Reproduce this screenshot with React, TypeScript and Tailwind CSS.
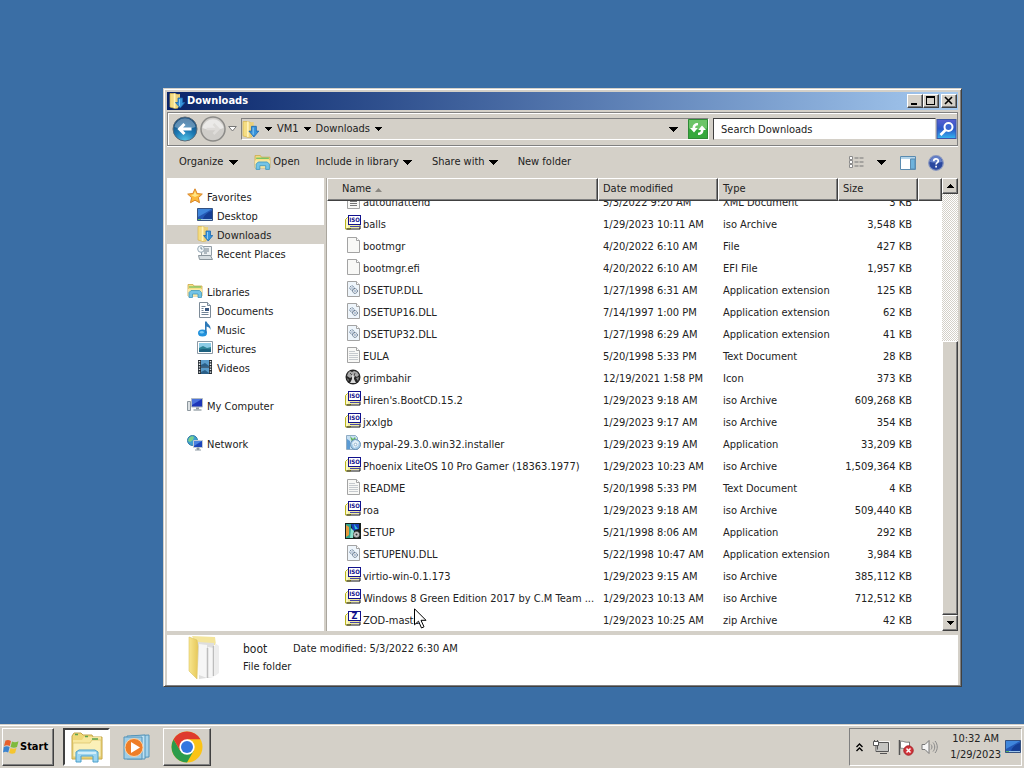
import type { ReactNode } from "react";

type IconProps = { className?: string };

const raised =
  "border border-t-white border-l-white border-r-[#404040] border-b-[#404040] bg-[#d4d0c8] shadow-[inset_-1px_-1px_0_#808080]";

/* ---------- small shapes ---------- */

function Caret() {
  return (
    <svg viewBox="0 0 9 5" className="w-[9px] h-[5px] shrink-0" shapeRendering="crispEdges" aria-hidden="true">
      <path d="M0 0h9L4.500 5z" fill="#000" />
    </svg>
  );
}

function SmallCaret({ up = false }: { up?: boolean }) {
  return (
    <svg viewBox="0 0 7 4" className="w-[7px] h-1 shrink-0" shapeRendering="crispEdges" aria-hidden="true">
      <path d={up ? "M0 4h7L3.500 0z" : "M0 0h7L3.500 4z"} fill="#000" />
    </svg>
  );
}

/* ---------- file icons ---------- */

function ArchiveIcon({ label }: { label: string }) {
  return (
    <svg viewBox="0 0 16 16" className="size-4 shrink-0" aria-hidden="true">
      <path d="M.5 4.500L2.500 2.500h3v11.500h-5z" fill="#fbf8c4" stroke="#b9b41e" />
      <path d="M3 4h12v9H3z" fill="#f0eca0" />
      <path d="M1.500 14h13.500V10.500" fill="none" stroke="#111" />
      <path d="M5 11.500h10" stroke="#4646a8" />
      <rect x="3.500" y=".5" width="12" height="9" fill="#fff" stroke="#11118c" />
      <text
        x="9.500"
        y={label === "Z" ? 8 : 7}
        textAnchor="middle"
        fontFamily="DejaVu Sans Condensed, sans-serif"
        fontWeight="bold"
        fontSize={label === "Z" ? 9 : 6}
        fill="#11118c"
      >
        {label}
      </text>
    </svg>
  );
}

function Sheet({ children, fill = "#f8f8f6" }: { children?: ReactNode; fill?: string }) {
  return (
    <svg viewBox="0 0 16 16" className="size-4 shrink-0" aria-hidden="true">
      <path d="M2.500.5h9l3 3v12h-12z" fill={fill} stroke="#a3a3a3" />
      <path d="M11.500.5v3h3" fill="#fff" stroke="#a3a3a3" />
      {children}
    </svg>
  );
}

function TextIcon() {
  return (
    <Sheet>
      <path d="M4 4.500h6M4 6.500h9M4 8.500h9M4 10.500h9M4 12.500h9" stroke="#c6cace" />
    </Sheet>
  );
}

function XmlIcon() {
  return (
    <Sheet>
      <path d="M5 8.500h7M5 10.500h7M5 12.500h7" stroke="#777" />
    </Sheet>
  );
}

function DllIcon() {
  return (
    <Sheet fill="#eef5fb">
      <circle cx="7" cy="7" r="2.100" fill="#fff" stroke="#4a6684" strokeDasharray="1.200 .5" />
      <circle cx="10" cy="10" r="2.300" fill="#fff" stroke="#3e5570" strokeDasharray="1.200 .5" />
      <circle cx="10" cy="10" r=".8" fill="#547ba8" />
      <circle cx="7" cy="7" r=".7" fill="#547ba8" />
    </Sheet>
  );
}

function GrimIcon() {
  return (
    <svg viewBox="0 0 16 16" className="size-4 shrink-0" aria-hidden="true">
      <circle cx="8" cy="8" r="7.500" fill="#252525" />
      <path d="M3 4l2-2 2 1 2-1 3 1 2 3-2 2-2-1-1 2-2-1-2 1-3-2z" fill="#a8a8a8" />
      <path d="M7 6h2v4l2 4H5l2-4z" fill="#d8d8d8" />
      <path d="M2 9l2 2-1 1zM11 9l3-1-1 4z" fill="#8a8a8a" />
      <path d="M5 4l2 2M10 4L9 7" stroke="#333" strokeWidth=".8" />
    </svg>
  );
}

function InstallerIcon() {
  return (
    <svg viewBox="0 0 16 16" className="size-4 shrink-0" aria-hidden="true">
      <path d="M1.500.5h9l2 2v12h-11z" fill="#c6dff2" stroke="#8facc4" />
      <path d="M2 4l3 2v8H2z" fill="#5b9bd4" />
      <path d="M5 1l3 3 2-2 1 3-4 2z" fill="#62b552" />
      <circle cx="10.500" cy="9.500" r="5" fill="#a8cde9" stroke="#6b93b4" />
      <path d="M7 8l3-3 4 2-1 4-4 2z" fill="#e2eff8" />
      <circle cx="10.500" cy="9.500" r="1.300" fill="#fff" stroke="#6b93b4" strokeWidth=".6" />
    </svg>
  );
}

function SetupIcon() {
  return (
    <svg viewBox="0 0 16 16" className="size-4 shrink-0" aria-hidden="true">
      <path d="M0 0h16v16H0z" fill="#18201c" />
      <path d="M1 1h5v14H1z" fill="#2fa58d" />
      <path d="M1 2l3 2v8l-3 2z" fill="#e49a3b" />
      <path d="M6 1h8v5L8 8z" fill="#1640b8" />
      <path d="M9 1l4 5h-3z" fill="#37c6dc" />
      <path d="M6 5l3 3-1 7H5z" fill="#8be0cd" />
      <circle cx="11.500" cy="11.500" r="3" fill="#c5c5c5" stroke="#555" strokeDasharray="1.500 1" />
      <circle cx="11.500" cy="11.500" r="1" fill="#333" />
    </svg>
  );
}

/* ---------- shell icons ---------- */

function StarIcon() {
  return (
    <svg viewBox="0 0 16 16" className="size-4 shrink-0" aria-hidden="true">
      <path
        d="M8 .8l2.100 4.700 5.200.6-3.900 3.500 1.100 5.100L8 12.200l-4.500 2.500 1.100-5.100L.7 6.100l5.200-.6z"
        fill="#fcb93b"
        stroke="#d9862a"
      />
      <path d="M8 3l1.400 3.500 3 .4-4.400 2-4-2 2.700-.4z" fill="#ffe78a" />
    </svg>
  );
}

function DesktopIcon({ className = "size-4" }: IconProps) {
  return (
    <svg viewBox="0 0 16 16" className={`${className} shrink-0`} aria-hidden="true">
      <path d="M.5 1.500h15v12H.5z" fill="#2458b5" stroke="#345180" />
      <path d="M1 2h14L1 10z" fill="#3f86dc" />
      <path d="M6 12c1-4 5-7 9-8v8z" fill="#153e94" />
      <path d="M1 12.500h14" stroke="#9fc6ea" />
      <path d="M1 12.500h3" stroke="#5db75a" />
    </svg>
  );
}

function DownloadsIcon({ className = "size-4" }: IconProps) {
  return (
    <svg viewBox="0 0 16 16" className={`${className} shrink-0`} aria-hidden="true">
      <path d="M1 .5h5L9 2v13l-3 .5L1 14z" fill="#f5dd83" stroke="#d8b64d" strokeWidth=".7" />
      <path d="M5.500.5V15" stroke="#fff3bd" strokeWidth="1.500" />
      <path d="M7 1.500l4-.5v13H7z" fill="#ebd07a" />
      <path d="M9 5h4.500v4.500h2.300l-4.600 5.500-4.700-5.500H9z" fill="#3794db" stroke="#1c68b0" strokeWidth=".8" />
      <path d="M10.500 6v7" stroke="#8ecbf4" />
    </svg>
  );
}

function RecentIcon() {
  return (
    <svg viewBox="0 0 16 16" className="size-4 shrink-0" aria-hidden="true">
      <path d="M4.500 1.500h10v9h-10z" fill="#edf1f3" stroke="#929da5" />
      <path d="M7 4h5M7 6h5M7 8h3" stroke="#71808b" />
      <path d="M1.500 10.500h12l2 4h-13z" fill="#d6dde1" stroke="#8b969d" />
      <circle cx="4" cy="4" r="3.300" fill="#f5f9fb" stroke="#94a6b2" />
      <path d="M4 2v2h1.500" stroke="#56738a" fill="none" strokeWidth=".8" />
    </svg>
  );
}

function LibraryIcon({ className = "size-4" }: IconProps) {
  return (
    <svg viewBox="0 0 16 16" className={`${className} shrink-0`} aria-hidden="true">
      <path d="M1 1.500h5l1 1.500h8v10H1z" fill="#f7df87" stroke="#cbaa48" strokeWidth=".8" />
      <path d="M2 4h12" stroke="#6abf62" strokeWidth="1.200" />
      <path d="M1 6h14v7H1z" fill="#fbeaa6" />
      <path d="M2 14.500V9.500L4 7.500h8.500l2 2v5H11V11H5.500v3.500z" fill="#74c4e6" stroke="#4198bd" strokeWidth=".8" />
    </svg>
  );
}

function DocumentsIcon() {
  return (
    <svg viewBox="0 0 16 16" className="size-4 shrink-0" aria-hidden="true">
      <path d="M2.500.5h8l3 3v12h-11z" fill="#fff" stroke="#7d8b98" />
      <path d="M10.500.5v3h3" fill="#d8e5ef" stroke="#7d8b98" />
      <path d="M4.500 4.500h4M4.500 6.500h2M4.500 8.500h2M4.500 10.500h7M4.500 12.500h7" stroke="#718496" />
      <path d="M8 6h4v3H8z" fill="#36557e" />
    </svg>
  );
}

function MusicIcon() {
  return (
    <svg viewBox="0 0 16 16" className="size-4 shrink-0" aria-hidden="true">
      <ellipse cx="5.500" cy="12" rx="4.500" ry="3.500" fill="#2292dc" />
      <ellipse cx="4.800" cy="11.200" rx="2" ry="1.300" fill="#7ac9f4" />
      <path d="M8 .5h1.600c.6 2.500 4.600 3.200 3.900 8.500-.8-2.500-2-3-3.900-3.600V12H8z" fill="#2c79b8" />
    </svg>
  );
}

function PicturesIcon() {
  return (
    <svg viewBox="0 0 16 16" className="size-4 shrink-0" aria-hidden="true">
      <path d="M.5 1.500h15v12H.5z" fill="#fff" stroke="#8b99a5" />
      <path d="M2 3h12v9H2z" fill="#8ccbe5" />
      <path d="M2 8l4-2 4 2 4-1v4H2z" fill="#2d8295" />
      <path d="M2 10c4-2 8 0 12-1v3H2z" fill="#1d617f" />
    </svg>
  );
}

function VideosIcon() {
  return (
    <svg viewBox="0 0 16 16" className="size-4 shrink-0" aria-hidden="true">
      <path d="M1 1h14v14H1z" fill="#262d34" />
      <path d="M4 1h8v6.500H4zM4 8.500h8V15H4z" fill="#5a9ccb" />
      <path d="M4 6l4-2 4 3v.5H4zM4 13l4-2 4 3v1H4z" fill="#2a5f88" />
      <path d="M2.500 2v12M13.500 2v12" stroke="#e8edf0" strokeWidth="1.400" strokeDasharray="1.300 1.300" />
    </svg>
  );
}

function ComputerIcon() {
  return (
    <svg viewBox="0 0 16 16" className="size-4 shrink-0" aria-hidden="true">
      <path d="M.5 4.500h3v9h-3z" fill="#dbe0e3" stroke="#8d979e" />
      <path d="M4.500 1.500h11v8.500h-11z" fill="#1d36b8" stroke="#b4bcc2" />
      <path d="M5 2h10L5 8z" fill="#4a72dc" />
      <path d="M9 10.500h3v2H9z" fill="#8f999f" />
      <path d="M6.500 13h8" stroke="#a2abb0" strokeWidth="1.500" />
    </svg>
  );
}

function NetworkIcon() {
  return (
    <svg viewBox="0 0 16 16" className="size-4 shrink-0" aria-hidden="true">
      <circle cx="5.500" cy="5.500" r="5" fill="#3e9fd0" stroke="#2f7ba6" />
      <path d="M2 3c2-2 4-2 5-1L6 5 3 7 1 6zM6 8l3-1v3H6z" fill="#7bcf8a" />
      <path d="M6.500 5.500h9v7h-9z" fill="#1c45ba" stroke="#c2ccd5" />
      <path d="M7 6h8l-8 5z" fill="#4a82df" />
      <path d="M10 13h2v1.500h-2zM8 15h6" fill="#7d8a95" stroke="#8e9aa3" />
    </svg>
  );
}

/* ---------- data ---------- */

type Kind = "xml" | "iso" | "zip" | "blank" | "dll" | "text" | "grim" | "installer" | "setup";

type FileRow = { name: string; date: string; type: string; size: string; kind: Kind };

const files: FileRow[] = [
  { name: "autounattend", date: "5/3/2022 9:20 AM", type: "XML Document", size: "3 KB", kind: "xml" },
  { name: "balls", date: "1/29/2023 10:11 AM", type: "iso Archive", size: "3,548 KB", kind: "iso" },
  { name: "bootmgr", date: "4/20/2022 6:10 AM", type: "File", size: "427 KB", kind: "blank" },
  { name: "bootmgr.efi", date: "4/20/2022 6:10 AM", type: "EFI File", size: "1,957 KB", kind: "blank" },
  { name: "DSETUP.DLL", date: "1/27/1998 6:31 AM", type: "Application extension", size: "125 KB", kind: "dll" },
  { name: "DSETUP16.DLL", date: "7/14/1997 1:00 PM", type: "Application extension", size: "62 KB", kind: "dll" },
  { name: "DSETUP32.DLL", date: "1/27/1998 6:29 AM", type: "Application extension", size: "41 KB", kind: "dll" },
  { name: "EULA", date: "5/20/1998 5:33 PM", type: "Text Document", size: "28 KB", kind: "text" },
  { name: "grimbahir", date: "12/19/2021 1:58 PM", type: "Icon", size: "373 KB", kind: "grim" },
  { name: "Hiren's.BootCD.15.2", date: "1/29/2023 9:18 AM", type: "iso Archive", size: "609,268 KB", kind: "iso" },
  { name: "jxxlgb", date: "1/29/2023 9:17 AM", type: "iso Archive", size: "354 KB", kind: "iso" },
  { name: "mypal-29.3.0.win32.installer", date: "1/29/2023 9:19 AM", type: "Application", size: "33,209 KB", kind: "installer" },
  { name: "Phoenix LiteOS 10 Pro Gamer (18363.1977)", date: "1/29/2023 10:23 AM", type: "iso Archive", size: "1,509,364 KB", kind: "iso" },
  { name: "README", date: "5/20/1998 5:33 PM", type: "Text Document", size: "4 KB", kind: "text" },
  { name: "roa", date: "1/29/2023 9:18 AM", type: "iso Archive", size: "509,440 KB", kind: "iso" },
  { name: "SETUP", date: "5/21/1998 8:06 AM", type: "Application", size: "292 KB", kind: "setup" },
  { name: "SETUPENU.DLL", date: "5/22/1998 10:47 AM", type: "Application extension", size: "3,984 KB", kind: "dll" },
  { name: "virtio-win-0.1.173", date: "1/29/2023 9:15 AM", type: "iso Archive", size: "385,112 KB", kind: "iso" },
  { name: "Windows 8 Green Edition 2017 by C.M Team ...", date: "1/29/2023 10:13 AM", type: "iso Archive", size: "712,512 KB", kind: "iso" },
  { name: "ZOD-master", date: "1/29/2023 10:25 AM", type: "zip Archive", size: "42 KB", kind: "zip" },
];

const fileIcons: Record<Kind, ReactNode> = {
  xml: <XmlIcon />,
  iso: <ArchiveIcon label="ISO" />,
  zip: <ArchiveIcon label="Z" />,
  blank: <Sheet />,
  dll: <DllIcon />,
  text: <TextIcon />,
  grim: <GrimIcon />,
  installer: <InstallerIcon />,
  setup: <SetupIcon />,
};

const places = [
  {
    name: "Favorites",
    icon: <StarIcon />,
    items: [
      { name: "Desktop", icon: <DesktopIcon /> },
      { name: "Downloads", icon: <DownloadsIcon />, active: true },
      { name: "Recent Places", icon: <RecentIcon /> },
    ],
  },
  {
    name: "Libraries",
    icon: <LibraryIcon />,
    items: [
      { name: "Documents", icon: <DocumentsIcon /> },
      { name: "Music", icon: <MusicIcon /> },
      { name: "Pictures", icon: <PicturesIcon /> },
      { name: "Videos", icon: <VideosIcon /> },
    ],
  },
  { name: "My Computer", icon: <ComputerIcon />, items: [] },
  { name: "Network", icon: <NetworkIcon />, items: [] },
];

/* ---------- window parts ---------- */

function TitleBar() {
  return (
    <div className="flex h-[18px] items-center bg-linear-to-r from-[#0a246a] to-[#a6caf0] pl-0.5 pr-px">
      <DownloadsIcon />
      <h1 className="ml-0.5 flex-1 font-bold text-white">Downloads</h1>
      <button aria-label="Minimize" className={`h-3.5 w-4 ${raised}`}>
        <svg viewBox="0 0 14 12" shapeRendering="crispEdges">
          <path d="M3 8h6v2H3z" />
        </svg>
      </button>
      <button aria-label="Maximize" className={`h-3.5 w-4 ${raised}`}>
        <svg viewBox="0 0 14 12" shapeRendering="crispEdges">
          <path d="M2 1h9v9H2zM3 3v6h7V3z" fillRule="evenodd" />
        </svg>
      </button>
      <button aria-label="Close" className={`ml-0.5 h-3.5 w-4 ${raised}`}>
        <svg viewBox="0 0 14 12">
          <path d="M3 2l7 7M10 2L3 9" stroke="#000" strokeWidth="1.600" />
        </svg>
      </button>
    </div>
  );
}

function AddressRow() {
  return (
    <div className="mt-0.5 flex h-[34px] items-center border border-[#808080] pl-1 shadow-[inset_1px_1px_0_#fff,0_1px_0_#fff]">
      <button aria-label="Back" className="size-[26px] shrink-0">
        <svg viewBox="0 0 26 26">
          <defs>
            <radialGradient id="back" cx=".5" cy="1" r=".9">
              <stop offset="0" stopColor="#54c8ea" />
              <stop offset=".5" stopColor="#1d7ab4" />
              <stop offset="1" stopColor="#134a7c" />
            </radialGradient>
          </defs>
          <circle cx="13" cy="13" r="12" fill="url(#back)" stroke="#5b6b78" />
          <path d="M2.500 11a10.700 10.700 0 0 1 21 0c-5 2-16 2-21 0z" fill="#a9c6dc" opacity=".5" />
          <path d="M19.500 13H8M12.500 8l-5 5 5 5" fill="none" stroke="#fff" strokeWidth="3" />
        </svg>
      </button>
      <button aria-label="Forward" className="ml-0.5 size-[26px] shrink-0">
        <svg viewBox="0 0 26 26">
          <circle cx="13" cy="13" r="12" fill="#cfcdc9" stroke="#8c8b88" strokeWidth="1.500" />
          <path d="M2.500 12a10.700 10.700 0 0 1 21 0c-5 2-16 2-21 0z" fill="#ebeae8" />
          <path d="M6.500 13H18M13.500 8l5 5-5 5" fill="none" stroke="#dedcd9" strokeWidth="2.500" />
        </svg>
      </button>
      <button aria-label="Recent pages" className="ml-0.5 shrink-0">
        <svg viewBox="0 0 9 6" className="h-1.5 w-[9px]">
          <path d="M.7.5h7.600L4.500 5z" fill="#fff" stroke="#777" />
        </svg>
      </button>
      <div className="ml-1 flex h-[22px] flex-1 items-center border border-t-[#808080] border-l-[#808080] border-r-white border-b-white">
        <DownloadsIcon className="size-[17px]" />
        <div className="ml-1.5 flex flex-1 items-center gap-[5px]">
          <SmallCaret />
          <a href="#vm1" className="flex items-center gap-[5px]">
            VM1 <SmallCaret />
          </a>
          <a href="#downloads" className="flex items-center gap-[5px]">
            Downloads <SmallCaret />
          </a>
        </div>
        <button aria-label="Previous locations" className="mr-2.5">
          <Caret />
        </button>
        <button aria-label="Refresh" className="size-5">
          <svg viewBox="0 0 20 20">
            <path d="M0 0h20v20H0z" fill="#35a83c" />
            <path d="M0 0h20v9c-7 2-13 2-20 0z" fill="#6cc468" />
            <path d="M.5.5h19v19H.5z" fill="none" stroke="#2f8a36" />
            <path d="M2 9h2.500c0-3 2-5 5.500-5v2.200c-2 0-2.800 1-2.800 2.800h2.500L6 13.500z" fill="#fff" />
            <path d="M18 11h-2.500c0 3-2 5-5.500 5v-2.200c2 0 2.800-1 2.800-2.800h-2.500L14 6.500z" fill="#fff" />
          </svg>
        </button>
      </div>
      <input
        aria-label="Search Downloads"
        placeholder="Search Downloads"
        className="ml-1 h-[22px] w-[223px] border border-t-[#404040] border-l-[#404040] border-r-[#d4d0c8] border-b-[#d4d0c8] bg-white pl-[7px] text-black outline-none placeholder:text-[#222]"
      />
      <button aria-label="Search" className="size-[21px] shrink-0">
        <svg viewBox="0 0 21 21">
          <defs>
            <linearGradient id="find" x1="0" y1="0" x2="0" y2="1">
              <stop offset="0" stopColor="#5a5fd0" />
              <stop offset=".5" stopColor="#2a57c8" />
              <stop offset="1" stopColor="#35b6f0" />
            </linearGradient>
          </defs>
          <rect x="1" y=".5" width="19" height="19" fill="url(#find)" stroke="#3c55a8" />
          <circle cx="12.500" cy="8" r="4" fill="#3a66d2" stroke="#fff" strokeWidth="2" />
          <path d="M9.500 11L4.500 16" stroke="#fff" strokeWidth="2.600" />
        </svg>
      </button>
    </div>
  );
}

function Toolbar() {
  return (
    <div className="mt-px flex h-[31px] items-center pl-3 pr-3.5">
      <button className="flex items-center gap-1.5">
        Organize <Caret />
      </button>
      <button className="ml-4 flex items-center gap-0.5">
        <LibraryIcon className="size-[17px]" /> Open
      </button>
      <button className="ml-4 flex items-center gap-1">
        Include in library <Caret />
      </button>
      <button className="ml-5 flex items-center gap-1">
        Share with <Caret />
      </button>
      <button className="ml-5">New folder</button>
      <div className="ml-auto flex items-center">
        <button aria-label="Details view">
          <svg viewBox="0 0 16 13" className="h-[13px] w-4">
            <path d="M.5.5h3v3h-3zM.5 4.500h3v3h-3zM.5 8.500h3v3h-3z" fill="#fff" stroke="#8b8b8b" />
            <path d="M5.500 2h10M5.500 6h10M5.500 10h10" stroke="#777" strokeDasharray="4 1" />
          </svg>
        </button>
        <button aria-label="Change view" className="ml-3 py-1">
          <Caret />
        </button>
        <button aria-label="Preview pane" className="ml-3.5">
          <svg viewBox="0 0 16 14" className="h-3.5 w-4">
            <path d="M.5.5h15v13H.5z" fill="#fff" stroke="#5a8bb0" />
            <path d="M1 1h14v2H1z" fill="#b5d5ea" />
            <path d="M10.500 3h4.500v10h-4.500z" fill="#6db2dc" stroke="#5a8bb0" />
          </svg>
        </button>
        <button aria-label="Help" className="ml-3">
          <svg viewBox="0 0 16 16" className="size-4">
            <circle cx="8" cy="8" r="7.300" fill="#2b489f" stroke="#8897c0" strokeWidth="1.200" />
            <path d="M2 7a6 6 0 0 1 12 0c-4 1-8 1-12 0z" fill="#6580c8" />
            <path d="M5.700 6.300C5.700 3 10.300 3.200 10.300 6c0 1.700-2.200 1.700-2.200 3.500M8.100 10.800v1.800" fill="none" stroke="#fff" strokeWidth="1.700" />
          </svg>
        </button>
      </div>
    </div>
  );
}

function Sidebar() {
  return (
    <nav className="flex w-[157px] shrink-0 flex-col gap-[19px] bg-white pt-[9px]">
      {places.map((group) => (
        <div key={group.name}>
          <a href="#place" className="flex h-[19px] items-start gap-1 pt-px pl-5">
            {group.icon} <span className="leading-5">{group.name}</span>
          </a>
          {group.items.map((item) => (
            <a
              key={item.name}
              href="#place"
              className={`flex h-[19px] items-start gap-1 pt-px pl-[30px] ${"active" in item ? "bg-[#d4d0c8]" : ""}`}
            >
              {item.icon} <span className="leading-5">{item.name}</span>
            </a>
          ))}
        </div>
      ))}
    </nav>
  );
}

const columns = "grid grid-cols-[271px_120px_120px_80px_1fr]";
const headCell =
  "flex items-center border-t border-l border-t-white border-l-white border-r border-b border-r-[#404040] border-b-[#404040] pl-1 text-left font-normal shadow-[inset_-1px_-1px_0_#808080]";

function FileTable() {
  return (
    <table className="flex min-h-0 min-w-0 flex-1 flex-col bg-white">
      <thead className="block shrink-0 bg-[#d4d0c8]">
        <tr className={`${columns} h-[23px]`}>
          <th className={`${headCell} gap-1 pl-3.5!`}>
            Name
            <svg viewBox="0 0 7 4" className="h-1 w-[7px]" aria-hidden="true">
              <path d="M0 4h7L3.500 0z" fill="#8a8781" />
            </svg>
          </th>
          <th className={headCell}>Date modified</th>
          <th className={headCell}>Type</th>
          <th className={headCell}>Size</th>
          <th className={headCell} aria-label="More columns" />
        </tr>
      </thead>
      <tbody className="flex min-h-0 flex-1 flex-col justify-end overflow-hidden">
        {files.map((file) => (
          <tr key={file.name} className={`${columns} h-[22px] shrink-0 items-start pt-0.5 leading-5 whitespace-nowrap`}>
            <td className="flex items-start gap-0.5 pl-[18px]">
              {fileIcons[file.kind]} {file.name}
            </td>
            <td className="pl-[5px]">{file.date}</td>
            <td className="pl-[5px]">{file.type}</td>
            <td className="pr-1.5 text-right">{file.size}</td>
            <td />
          </tr>
        ))}
      </tbody>
    </table>
  );
}

function Scrollbar() {
  return (
    <div className="flex w-4 shrink-0 flex-col bg-[conic-gradient(#fff_25%,#d4d0c8_0_50%,#fff_0_75%,#d4d0c8_0)] bg-[length:2px_2px]">
      <button aria-label="Scroll up" className={`flex h-4 items-center justify-center ${raised}`}>
        <SmallCaret up />
      </button>
      <div className="grow-[147]" />
      <div className={`grow-[273] ${raised}`} />
      <button aria-label="Scroll down" className={`flex h-4 items-center justify-center ${raised}`}>
        <SmallCaret />
      </button>
    </div>
  );
}

function DetailsPane() {
  return (
    <div className="mt-1 flex h-[50px] shrink-0 bg-white pl-[21px]">
      <svg viewBox="0 0 36 46" className="h-[46px] w-9" aria-hidden="true">
        <defs>
          <linearGradient id="folder" x1="0" x2="1">
            <stop offset="0" stopColor="#f8e68f" />
            <stop offset="1" stopColor="#e6c85a" />
          </linearGradient>
        </defs>
        <path d="M4 1l23 1 1 8-19 2z" fill="#f4e59c" />
        <path d="M10 7l16 1v34l-15 2z" fill="#dedede" />
        <path d="M11 9l8 1v33l-8-3zM20 12l6 1v29h-6z" fill="#f6f6f6" />
        <path d="M19.500 13v30M25.500 11v30" stroke="#bdbdbd" strokeWidth="1.500" />
        <path d="M27 8l4 3v27l-4 3z" fill="#ededed" />
        <path d="M1 2l8 3 1 7-1 32-8-8z" fill="url(#folder)" stroke="#dcc361" strokeWidth=".6" />
      </svg>
      <div className="ml-[19px] pt-[5px]">
        <div className="flex h-[18px] items-center">
          <span className="w-[50px] text-xs">boot</span>
          <span>Date modified:</span>
          <span className="ml-[3px]">5/3/2022 6:30 AM</span>
        </div>
        <div className="flex h-[18px] items-center">File folder</div>
      </div>
    </div>
  );
}

/* ---------- taskbar ---------- */

function Taskbar() {
  return (
    <footer className="flex h-11 shrink-0 items-stretch border-t border-[#d4d0c8] bg-[#d4d0c8] px-0.5 pt-[3px] pb-0.5 shadow-[inset_0_1px_0_#fff]">
      <button className={`flex w-[52px] items-center gap-px text-[11px] font-bold text-black ${raised}`}>
        <svg viewBox="0 0 16 16" className="size-4 shrink-0" aria-hidden="true">
          <path d="M2.500 1.500C5 .5 6 1 8 2L6.800 7C5 6 3 6 1 7z" fill="#e8602c" />
          <path d="M9 2.500c2 1 4 1 6.500-.3L14 8c-2 1-4 1-6.500 0z" fill="#7fba3c" />
          <path d="M.8 8c2-1 4-1 5.800 0L5.200 13.500c-2-1-3.500-1-5.200 0z" fill="#3b84cf" />
          <path d="M7.500 9c2 1 4 1 6 0l-1.400 5c-2 1-4 1-6 0z" fill="#f5c52f" />
        </svg>
        Start
      </button>
      <button
        aria-label="Windows Explorer"
        className="ml-[9px] flex w-[47px] items-center justify-center border-2 border-t-[#404040] border-l-[#404040] border-r-white border-b-white bg-white"
      >
        <svg viewBox="0 0 34 32" className="h-8 w-[34px]">
          <path d="M2 5l2-3h7l2 2h9l1 2h9v22H2z" fill="#efd878" stroke="#c5a648" />
          <path d="M3 9h9l2-3h17v20H3z" fill="#f7e79e" />
          <path d="M3 12h17l2-3h9v17H3z" fill="#fbf0b8" stroke="#d9c064" strokeWidth=".7" />
          <path d="M5 3.500h3M15 5.500h3M22 8h6" stroke="#5ca34c" strokeWidth="1.500" />
          <path d="M6 31V21l3-2h16l3 2v10h-5v-6H11v6z" fill="#9bd5f0" stroke="#4d9fcb" />
          <path d="M8 22h18" stroke="#e4f6fd" strokeWidth="1.500" />
        </svg>
      </button>
      <button aria-label="Media Player" className="ml-3 flex w-[29px] items-center justify-center">
        <svg viewBox="0 0 28 26" className="h-[26px] w-7">
          <path d="M8 2l18-1v22l-18 1z" fill="#a5d3eb" stroke="#5494b9" />
          <path d="M4 2l18-1v24H4z" fill="#bfe1f2" stroke="#5494b9" />
          <path d="M1 3h18v22H1z" fill="#9fcde6" stroke="#5494b9" />
          <circle cx="11" cy="13.500" r="9" fill="#ee7d27" stroke="#fbd3a6" />
          <path d="M8 8l9 5.500L8 19z" fill="#fff" />
        </svg>
      </button>
      <button aria-label="Chrome" className={`ml-3 flex w-12 items-center justify-center ${raised}`}>
        <svg viewBox="0 0 32 32" className="size-8">
          <circle cx="16" cy="16" r="15.500" fill="#fbc316" />
          <path d="M2.580 8.250L9.290 19.870 16 16l6.710 3.870L16 31.500A15.500 15.500 0 0 1 2.580 8.250z" fill="#2b9c4b" />
          <path d="M2.580 8.250A15.500 15.500 0 0 1 29.420 8.250H16V16L9.290 19.870z" fill="#de3b2e" />
          <circle cx="16" cy="16" r="7.700" fill="#fff" />
          <circle cx="16" cy="16" r="6" fill="#3376e0" />
        </svg>
      </button>
      <div className="ml-auto flex items-center border border-t-[#808080] border-l-[#808080] border-r-white border-b-white pl-1.5">
        <button aria-label="Show hidden icons">
          <svg viewBox="0 0 7 9" className="h-[9px] w-[7px]">
            <path d="M.5 4l3-3 3 3M.5 8l3-3 3 3" fill="none" stroke="#000" strokeWidth="1.400" />
          </svg>
        </button>
        <svg viewBox="0 0 17 16" className="ml-2.5 h-4 w-[17px]" aria-hidden="true">
          <path d="M5.500 3.500h10v8h-10z" fill="#c9c9c6" stroke="#fff" strokeWidth="2.500" />
          <path d="M4.500 3.500h11v9h-11zM7 14.500h7" fill="#c5c5c2" stroke="#555" />
          <path d="M.5 2.500h5v4h-5zM3 6.500v6h2M1.500 1v1.500M4.500 1v1.500" fill="#fff" stroke="#555" />
        </svg>
        <svg viewBox="0 0 17 17" className="ml-[7px] size-[17px]" aria-hidden="true">
          <path d="M2.500 1v15" stroke="#555" strokeWidth="1.500" />
          <path d="M3.500 2.500c3-1 4 1.500 9 .5v7c-5 1-6-1.500-9-.5z" fill="#fff" stroke="#777" />
          <circle cx="11.500" cy="11.500" r="4.700" fill="#d3343a" stroke="#a52028" />
          <path d="M9.500 9.500l4 4M13.500 9.500l-4 4" stroke="#fff" strokeWidth="1.500" />
        </svg>
        <svg viewBox="0 0 17 16" className="ml-[7px] h-4 w-[17px]" aria-hidden="true">
          <path d="M1 5.500h3l4-4v13l-4-4H1z" fill="#f5f5f5" stroke="#777" />
          <path d="M10 5.500c1.300 1.500 1.300 3.500 0 5M12 3.500c2.300 2.500 2.300 6.500 0 9M14 2c3 3.500 3 8.500 0 12" fill="none" stroke="#888" />
        </svg>
        <time className="ml-3 text-center leading-4">
          10:32 AM
          <br />
          1/29/2023
        </time>
        <DesktopIcon className="ml-1 size-4" />
      </div>
    </footer>
  );
}

export default function App() {
  return (
    <div className="relative flex h-screen flex-col overflow-hidden bg-[#3a6ea5] font-['DejaVu_Sans_Condensed','DejaVu_Sans',sans-serif] text-[11px] text-[#222]">
      <main className="flex min-h-0 flex-1 pt-[88px] pr-[62px] pb-[37px] pl-[163px]">
        <section className="flex min-w-0 flex-1 flex-col border border-t-[#d4d0c8] border-l-[#d4d0c8] border-r-[#404040] border-b-[#404040] bg-[#d4d0c8] p-[3px] pb-px shadow-[inset_1px_1px_0_#fff,inset_-1px_-1px_0_#808080]">
          <TitleBar />
          <AddressRow />
          <Toolbar />
          <div className="flex min-h-0 flex-1">
            <Sidebar />
            <div className="w-[3px] shrink-0 border-r border-[#aaa69e]" />
            <FileTable />
            <Scrollbar />
          </div>
          <DetailsPane />
        </section>
      </main>
      <Taskbar />

      {/* pointer */}
      <svg viewBox="0 0 13 21" className="pointer-events-none absolute top-[608px] left-[414px] h-[21px] w-[13px]">
        <path d="M.5.8v16l4-3.600 3 6.800 2.500-1.200-3-6.500h5z" fill="#fff" stroke="#000" />
      </svg>
    </div>
  );
}
